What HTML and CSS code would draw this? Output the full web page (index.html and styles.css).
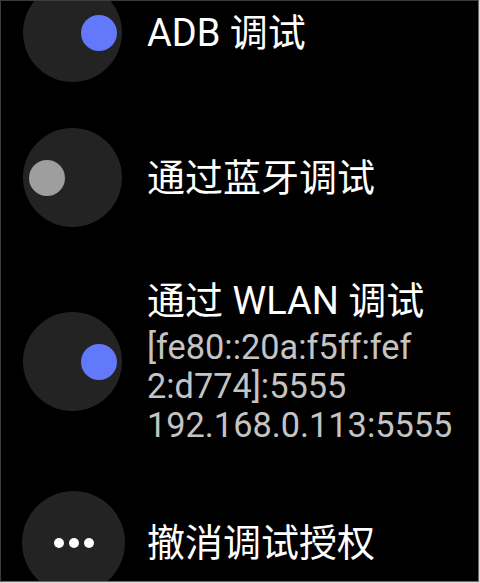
FILE: index.html
```html
<!DOCTYPE html>
<html>
<head>
    <meta charset="utf-8">
    <link rel="stylesheet" href="styles.css">
</head>
<body>
    <div class="screen">
        <div class="list">
            <div class="item">
                <div class="toggle on"><span class="knob"></span></div>
                <div class="label">
                    <div class="title">ADB 调试</div>
                </div>
            </div>

            <div class="item">
                <div class="toggle"><span class="knob"></span></div>
                <div class="label">
                    <div class="title">通过蓝牙调试</div>
                </div>
            </div>

            <div class="item tall">
                <div class="toggle on"><span class="knob"></span></div>
                <div class="label">
                    <div class="title">通过 WLAN 调试</div>
                    <div class="summary">[fe80::20a:f5ff:fef<br>2:d774]:5555<br>192.168.0.113:5555</div>
                </div>
            </div>

            <div class="item">
                <div class="toggle more">
                    <span class="dot"></span>
                    <span class="dot"></span>
                    <span class="dot"></span>
                </div>
                <div class="label">
                    <div class="title">撤消调试授权</div>
                </div>
            </div>
        </div>
    </div>
</body>
</html>
```

FILE: styles.css
```css
* {
    margin: 0;
    padding: 0;
    box-sizing: border-box;
}

html {
    background: #d9d9d9;
}

body {
    width: 480px;
    height: 583px;
    overflow: hidden;
    font-family: Roboto, "Noto Sans CJK SC", sans-serif;
}

.screen {
    width: 479px;
    height: 582px;
    background: #000;
    border: 1px solid #3c3c3c;
    border-right-color: #6a6a6a;
    border-bottom-color: #6a6a6a;
    overflow: hidden;
}

.list {
    display: flex;
    flex-direction: column;
    gap: 46px;
    margin-top: -18px;
}

.item {
    display: flex;
    align-items: center;
    gap: 25px;
    padding-left: 22px;
}

.item.tall {
    margin-top: 5px;
}

.toggle {
    flex: none;
    width: 99px;
    height: 99px;
    border-radius: 50%;
    background: #232323;
    display: flex;
    align-items: center;
    padding-left: 6px;
}

.knob {
    width: 36px;
    height: 36px;
    border-radius: 50%;
    background: #9e9e9e;
}

.toggle.on {
    justify-content: flex-end;
    padding-left: 0;
    padding-right: 5px;
}

.toggle.on .knob {
    background: #6179fa;
}

.toggle.more {
    width: 103px;
    height: 103px;
    margin-left: -1px;
    margin-right: -3px;
    justify-content: center;
    gap: 5px;
    padding: 0;
}

.dot {
    width: 10px;
    height: 10px;
    border-radius: 50%;
    background: #fff;
}

.title {
    color: #fff;
    font-size: 38px;
    line-height: 46px;
}

.summary {
    margin-top: 4px;
    color: #c4c4c4;
    font-size: 34.3px;
    line-height: 39px;
}
```
